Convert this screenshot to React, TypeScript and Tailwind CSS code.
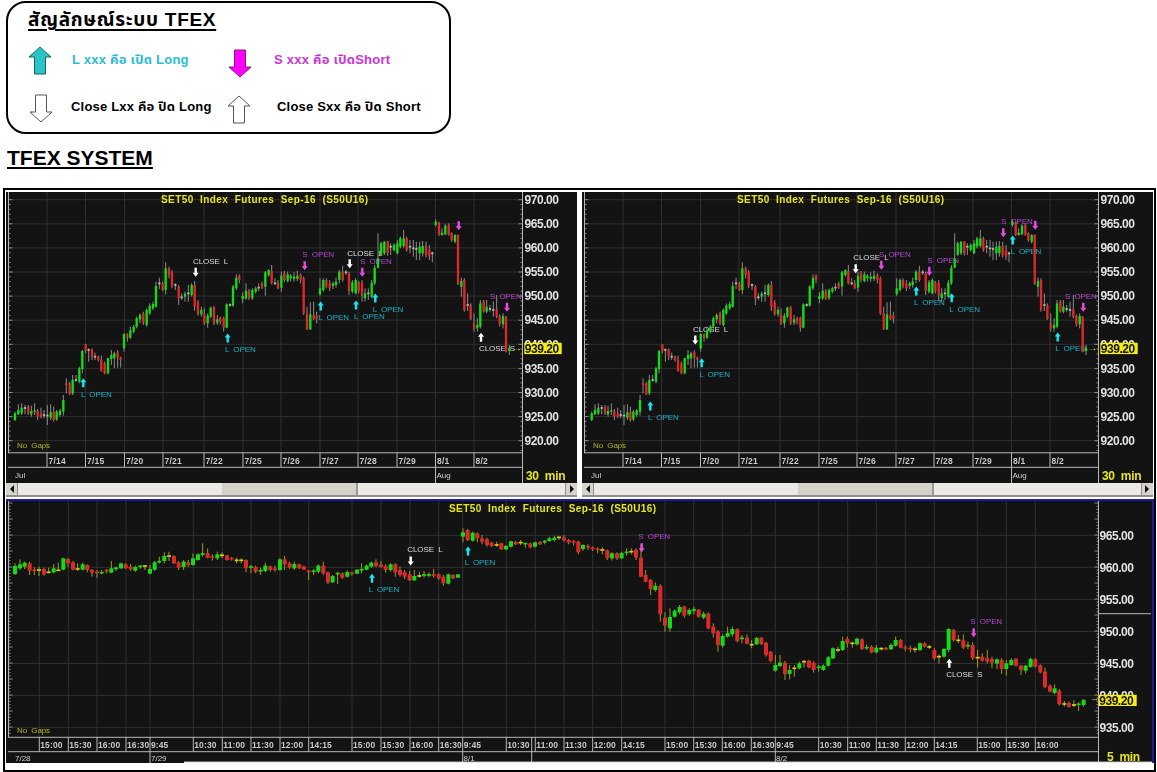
import React from "react";

type C = [number, number, number, number, number, string];
type Note = [string, number, number, string];
type Arrow = [number, number, string, string];

const TEAL = "#17b4c6";
const PURP = "#b545d4";
const WHITE = "#dcdcdc";
const ACY = "#17e8f2";
const AMG = "#e84ae8";
const AWH = "#ffffff";

const a: C[] = [
[45,685,705,680,708,"g"],[55,675,688,658,690,"g"],[65,668,685,655,690,"g"],[75,669,669,660,688,"d"],[85,665,685,660,690,"r"],[94,678,688,662,695,"g"],[104,676,680,655,690,"g"],[113,678,695,672,705,"r"],[123,685,695,668,700,"r"],[132,690,690,675,700,"d"],[142,692,692,660,720,"d"],[152,682,698,658,705,"g"],[161,680,705,665,710,"r"],[170,680,703,675,708,"g"],[180,677,690,672,695,"g"],[190,645,680,630,692,"g"],
[199,595,600,580,625,"r"],[209,595,628,590,630,"r"],[218,585,625,570,630,"g"],[228,585,585,570,590,"d"],[238,550,590,545,595,"g"],[247,498,552,495,565,"g"],[257,478,498,478,505,"r"],[266,495,495,490,530,"d"],[276,493,515,490,525,"r"],[285,515,515,503,525,"d"],[295,515,525,512,530,"r"],[304,525,558,512,560,"r"],[314,535,565,530,568,"r"],[324,520,565,518,568,"g"],[334,510,522,495,540,"g"],[343,505,520,500,550,"g"],[353,502,518,495,548,"r"],[362,518,525,515,548,"r"],
[372,447,490,445,500,"g"],[382,448,458,445,470,"r"],[391,436,458,425,462,"g"],[401,425,440,420,445,"g"],[410,400,425,395,430,"g"],[420,390,403,385,415,"g"],[430,385,415,380,420,"r"],[440,375,420,370,425,"g"],[449,362,385,355,390,"g"],[459,357,370,350,375,"g"],[468,303,365,290,368,"g"],[478,295,295,278,312,"d"],[488,295,315,290,318,"r"],[497,250,315,232,328,"g"],[507,250,270,245,280,"r"],[516,262,303,255,310,"r"],[526,300,300,295,315,"d"],[536,305,340,300,360,"r"],[545,337,337,325,345,"d"],[555,326,335,320,350,"g"],[565,325,325,300,350,"d"],[575,300,330,295,335,"g"],[584,300,365,288,378,"r"],[594,352,388,345,392,"r"],[604,375,388,365,395,"g"],[613,388,415,370,420,"r"],[623,392,415,385,428,"g"],[632,368,395,365,400,"g"],[642,367,415,363,420,"r"],[652,403,413,390,420,"g"],[661,400,410,395,418,"r"],[671,398,428,395,440,"r"],[680,358,428,355,430,"g"],[690,360,360,355,365,"d"],[699,305,362,300,365,"g"],[709,278,310,268,315,"g"],[718,272,285,268,295,"r"],
[728,333,342,322,355,"g"],[738,317,340,295,345,"g"],[747,318,340,312,345,"r"],[757,315,340,310,345,"g"],[767,310,320,305,325,"g"],[776,308,308,295,318,"d"],[786,295,308,290,312,"r"],[796,262,305,258,332,"g"],[806,255,270,253,275,"g"],[815,258,295,240,298,"r"],[825,295,295,280,300,"d"],[834,295,310,285,312,"r"],[844,272,308,260,320,"g"],
];
const b: C[] = [
[-17,265,285,258,292,"r"],[-7,268,288,260,292,"g"],[2,272,280,267,290,"g"],[12,275,282,262,290,"g"],[22,272,282,257,288,"g"],[32,270,285,265,295,"r"],[41,280,385,275,390,"r"],[51,385,433,365,435,"r"],[61,388,433,352,435,"g"],[71,390,402,350,405,"r"],[80,392,402,380,415,"r"],
[90,310,328,280,332,"g"],[100,285,315,280,320,"g"],[109,285,305,280,310,"r"],[119,295,310,285,318,"r"],[129,295,303,290,312,"g"],[138,290,300,278,308,"g"],[148,260,285,255,295,"g"],[158,260,285,242,290,"r"],[168,262,262,255,270,"d"],[177,265,318,260,330,"r"],[187,292,320,285,325,"g"],[197,285,325,280,328,"g"],[206,292,318,288,325,"r"],[216,293,332,285,350,"r"],[225,325,340,310,350,"g"],[235,325,325,310,345,"d"],[245,293,335,285,340,"g"],[254,248,295,240,300,"g"],[264,220,248,145,250,"g"],[273,175,210,170,212,"g"],[283,170,205,168,210,"g"],[293,170,205,168,212,"r"],[302,185,185,175,210,"d"],[312,180,195,175,200,"g"],[322,175,205,165,208,"g"],[331,160,185,155,190,"g"],[341,160,183,135,188,"g"],[350,160,195,155,200,"r"],[360,185,185,165,205,"d"],[370,190,190,165,215,"d"],[379,192,192,170,225,"d"],[389,185,205,170,225,"g"],[398,183,205,168,215,"g"],[408,183,210,170,218,"r"],[418,195,215,180,225,"r"],[427,205,205,200,232,"d"],
[437,110,120,103,125,"g"],[447,112,150,110,153,"r"],[456,143,150,130,152,"g"],[466,122,148,118,150,"g"],[476,120,150,115,152,"r"],[485,145,165,142,170,"r"],[495,150,170,148,175,"g"],[504,150,297,148,300,"r"],[514,288,305,278,335,"g"],[523,285,375,280,380,"r"],[533,360,360,325,378,"d"],[542,360,402,355,405,"r"],[552,415,432,385,440,"r"],[562,420,430,400,440,"g"],[571,355,425,345,430,"g"],[581,350,380,345,383,"r"],[590,365,380,345,385,"g"],[600,372,372,360,380,"d"],[610,375,375,350,395,"d"],[620,373,395,330,400,"r"],[629,393,418,388,425,"r"],[639,393,418,385,430,"g"],[648,395,500,393,502,"r"],[658,488,498,480,510,"g"],
];
const top: C[] = [...a, ...b.map((c) => [c[0] + 870, c[1], c[2], c[3], c[4], c[5]] as C)];

const c6: C[] = [
[45,213,237,205,240,"g"],[60,208,220,193,225,"g"],[74,203,215,200,222,"g"],[89,205,227,200,240,"r"],[103,226,226,217,240,"R"],[117,225,225,215,243,"d"],[132,222,238,218,242,"r"],[146,232,232,218,235,"d"],[161,220,232,208,235,"g"],[175,226,226,203,228,"d"],[190,190,224,188,226,"g"],[204,192,205,190,215,"r"],[219,202,224,198,226,"r"],[233,222,222,205,228,"d"],[248,208,224,203,226,"g"],[262,210,225,208,232,"r"],[276,225,233,222,245,"r"],[291,232,232,225,248,"R"],[305,233,233,225,238,"G"],[320,227,227,222,235,"R"],[334,220,233,198,235,"g"],[348,220,220,215,228,"G"],[363,205,220,203,222,"g"],[377,208,220,205,222,"r"],[392,215,223,207,228,"r"],[406,216,227,212,230,"g"],[421,214,214,210,222,"G"],[435,213,213,210,225,"d"],[450,222,236,210,237,"g"],[464,202,224,198,228,"g"],[478,200,200,185,206,"G"],[493,183,198,172,205,"g"],[507,183,183,170,198,"d"],[522,183,205,181,207,"r"],[536,202,218,198,225,"r"],[551,200,216,195,225,"g"],[565,202,210,195,215,"r"],[579,190,210,175,212,"g"],[594,178,195,175,197,"g"],[608,177,177,145,185,"G"],[623,174,188,160,190,"r"],[637,186,186,178,197,"R"],[652,178,190,170,195,"g"],[666,181,181,172,190,"d"],[681,181,195,180,197,"r"],[695,191,191,186,197,"R"],[710,196,196,188,205,"d"],[724,196,196,190,205,"d"],[738,195,220,193,232,"r"],[753,216,216,210,235,"G"],[767,216,230,212,235,"r"],[782,227,227,218,240,"G"],[796,212,228,203,232,"g"],[811,214,225,212,230,"r"],[825,223,223,212,230,"R"],[840,193,225,190,228,"g"],[854,193,208,183,225,"r"],[869,205,218,200,222,"r"],[883,207,220,200,225,"g"],[898,208,220,206,222,"r"],[912,215,224,212,225,"r"],[926,229,229,225,255,"R"],[941,229,229,222,240,"G"],[955,212,230,208,235,"g"],[970,212,235,200,240,"r"],[984,232,263,230,267,"r"],[998,243,262,240,264,"g"],[1013,236,236,230,267,"G"],[1027,235,248,232,252,"r"],[1042,231,245,226,248,"g"],[1056,235,235,230,242,"R"],[1071,224,236,222,238,"g"],[1085,224,224,205,235,"G"],[1100,212,224,208,226,"g"],[1114,203,215,200,218,"g"],[1128,202,213,193,216,"r"],[1143,209,216,198,218,"r"],[1157,213,225,208,233,"r"],
];
const c7: C[] = [
[2,208,225,205,230,"g"],[16,208,232,205,245,"r"],[30,225,240,215,245,"r"],[44,232,245,225,252,"r"],[59,238,256,228,258,"r"],[73,243,256,225,258,"g"],[88,243,243,230,248,"d"],[102,240,240,228,248,"G"],[117,240,240,232,247,"G"],[131,240,240,222,248,"R"],[146,238,250,235,255,"r"],[160,245,265,240,272,"r"],[175,238,266,236,268,"g"],[189,240,250,238,252,"r"],[204,238,248,238,250,"g"],
[219,112,125,100,142,"g"],[233,105,135,102,138,"r"],[248,113,137,110,140,"g"],[262,115,130,112,142,"r"],[276,130,140,120,148,"r"],[291,133,150,128,155,"r"],[305,143,153,140,156,"r"],[320,150,150,140,155,"d"],[334,145,163,143,165,"r"],[348,153,163,150,166,"g"],[363,139,155,137,158,"g"],[377,141,148,138,150,"r"],[392,143,143,135,150,"d"],[406,146,146,143,158,"G"],[421,145,157,143,160,"r"],[435,142,155,140,158,"g"],[450,142,148,138,150,"r"],[464,140,140,135,148,"G"],[478,130,138,125,140,"g"],[493,128,135,122,140,"g"],[507,127,127,125,135,"d"],[522,127,136,120,140,"r"],[536,135,143,132,148,"r"],[551,140,140,135,152,"R"],[565,140,172,137,178,"r"],[579,150,162,148,168,"g"],[594,155,155,148,165,"R"],[608,157,163,155,168,"r"],[623,163,163,157,175,"R"],[637,165,165,157,178,"d"],[652,166,190,164,195,"r"],[666,175,190,172,197,"g"],[681,175,190,172,195,"r"],[695,174,190,170,193,"g"],[710,172,172,160,182,"G"],[724,170,170,160,178,"d"],[738,165,188,160,195,"r"],[753,188,245,150,247,"r"],[767,240,260,225,262,"r"],[782,255,282,252,300,"r"],[796,272,285,262,290,"g"],[811,273,358,268,380,"r"],[825,368,392,352,410,"r"],[840,366,400,340,410,"g"],[854,347,365,343,368,"g"],[869,336,352,330,358,"g"],[883,335,362,332,368,"r"],[898,345,358,340,362,"g"],[912,345,345,335,358,"G"],[926,344,365,342,368,"r"],[941,356,368,350,372,"g"],[955,356,400,352,403,"r"],[970,395,415,385,428,"r"],[984,410,450,405,470,"r"],[998,423,452,418,458,"g"],[1013,414,425,395,428,"g"],[1027,402,418,395,425,"g"],[1042,403,438,400,442,"r"],[1056,430,430,420,445,"G"],[1071,428,446,418,448,"r"],[1085,449,449,435,460,"d"],[1100,429,448,426,450,"g"],
];
const c8: C[] = [
[4,428,447,426,450,"r"],[18,444,480,440,485,"r"],[32,470,498,468,502,"r"],[46,510,527,480,530,"g"],[60,503,513,480,516,"g"],[75,503,537,498,555,"r"],[89,525,537,510,553,"g"],[103,520,520,510,545,"d"],[118,505,520,500,523,"g"],[132,500,500,495,518,"d"],[147,497,517,495,520,"r"],[161,503,525,500,533,"r"],[176,517,517,510,530,"G"],[190,512,525,508,528,"g"],[205,487,512,483,515,"g"],[219,460,490,457,492,"g"],[234,465,465,455,472,"d"],[248,438,465,425,468,"g"],[262,432,445,425,458,"r"],[277,445,445,440,458,"d"],[291,431,448,428,452,"g"],[306,433,462,430,465,"r"],[320,458,458,448,465,"G"],[335,455,472,450,475,"r"],[349,458,472,450,475,"g"],[364,461,461,456,466,"d"],[378,461,461,456,466,"R"],[393,450,463,445,465,"g"],[407,435,452,425,455,"g"],[422,435,458,432,460,"r"],[436,459,459,450,468,"R"],[451,461,461,452,472,"R"],[465,463,463,455,473,"d"],[480,445,465,442,468,"g"],[494,445,455,442,458,"r"],[508,456,456,450,462,"d"],[523,465,490,460,495,"r"],[537,485,485,478,505,"d"],[552,462,485,458,488,"g"],[566,402,465,400,472,"g"],[581,405,436,402,440,"r"],[595,436,436,420,445,"d"],[610,436,458,418,462,"r"],[624,452,452,440,462,"G"],[638,450,490,442,495,"r"],[653,488,488,465,518,"d"],[667,485,497,475,500,"r"],[682,490,500,465,505,"r"],[696,492,503,485,520,"r"],[711,493,506,490,522,"g"],[725,495,522,490,537,"r"],[739,505,522,495,542,"g"],[754,495,510,490,512,"g"],[768,491,512,490,515,"r"],[783,512,525,510,540,"r"],[797,512,527,510,535,"g"],[812,492,516,488,518,"g"],[826,493,515,490,518,"r"],[841,511,532,508,535,"r"],[855,530,576,518,580,"r"],[870,572,590,568,592,"r"],[884,580,594,568,598,"g"],[898,587,628,582,632,"r"],[913,627,627,618,635,"d"],[927,624,635,620,638,"r"],[942,630,630,615,637,"d"],[956,628,628,622,648,"G"],[971,615,630,612,635,"g"],
];

const GREEN = "#14dc14";
const RED = "#dc2a2a";

function Candles({ data, wick, bw }: { data: C[]; wick: string; bw: number }) {
  const gray = wick === "#8c8c8c";
  return (
    <g>
      {data.map((d, i) => {
        const [x, t, bt, wt, wb, k] = d;
        const color = k === "g" || k === "G" ? GREEN : k === "r" || k === "R" ? RED : k === "d" ? (gray ? "#b8b8b8" : "#d8c820") : wick;
        return (
          <g key={i}>
            <line x1={x} x2={x} y1={wt} y2={wb} stroke={wick} strokeWidth={3} />
            {bt > t ? (
              <rect x={x - bw / 2} y={t} width={bw} height={bt - t} fill={color} />
            ) : (
              <rect x={x - bw / 2} y={t - 2.5} width={bw} height={5} fill={color} />
            )}
          </g>
        );
      })}
    </g>
  );
}

function Arr({ x, y, dir, color }: { x: number; y: number; dir: string; color: string }) {
  const p = dir === "up"
    ? `M${x} ${y - 4.5} L${x + 3} ${y - 0.5} H${x + 1.2} V${y + 4.5} H${x - 1.2} V${y - 0.5} H${x - 3} Z`
    : `M${x} ${y + 4.5} L${x + 3} ${y + 0.5} H${x + 1.2} V${y - 4.5} H${x - 1.2} V${y + 0.5} H${x - 3} Z`;
  return <path d={p} fill={color} />;
}

function Ticks({ x, y0, y1, step, major, side }: { x: number; y0: number; y1: number; step: number; major: number; side: number }) {
  const out: React.ReactNode[] = [];
  let n = 0;
  for (let y = y0; y <= y1; y += step) {
    const big = n % major === 0;
    out.push(<line key={n} x1={x} x2={x + side * (big ? 4 : 2)} y1={y} y2={y} stroke="#a8a8a8" strokeWidth={0.8} />);
    n++;
  }
  return <g>{out}</g>;
}

const TITLE = "SET50  Index  Futures  Sep-16  (S50U16)";
const gridDates: [number, string][] = [[47,"7/14"],[85.5,"7/15"],[124.5,"7/20"],[163,"7/21"],[204,"7/22"],[243,"7/25"],[281,"7/26"],[320,"7/27"],[358,"7/28"],[397,"7/29"],[435.5,"8/1"],[474,"8/2"]];

function Notes({ notes }: { notes: Note[] }) {
  return (
    <g>
      {notes.map(([t, x, y, c], i) => (
        <text key={i} x={x} y={y + 3} fontSize={8} fill={c} xmlSpace="preserve" letterSpacing={-0.1}>{t}</text>
      ))}
    </g>
  );
}

function ArrowsG({ arrows }: { arrows: Arrow[] }) {
  return <g>{arrows.map(([x, y, d, c], i) => <Arr key={i} x={x} y={y} dir={d} color={c} />)}</g>;
}

function TopChart({ dx, notes, arrows, lastX }: { dx: number; notes: Note[]; arrows: Arrow[]; lastX: number }) {
  const prices = [970, 965, 960, 955, 950, 945, 940, 935, 930, 925, 920];
  const py = (p: number) => 199.7 + (970 - p) * 4.82;
  const w = dx ? 570.5 : 571;
  return (
    <svg viewBox={`6 192 ${w} 291`} width={w} height={291} className="block blur-[0.3px] [font-family:'Liberation_Sans',Arial,sans-serif] bg-[#131313]">
      {prices.map((p) => <line key={p} x1={8} x2={522} y1={py(p)} y2={py(p)} stroke="#303030" />)}
      {gridDates.map(([x]) => <line key={x} x1={x} x2={x} y1={192} y2={452.5} stroke="#303030" />)}
      <line x1={8.5} x2={8.5} y1={192} y2={453} stroke="#b8b8b8" />
      <line x1={522.5} x2={522.5} y1={192} y2={483} stroke="#b8b8b8" />
      <line x1={8} x2={522} y1={452.8} y2={452.8} stroke="#b8b8b8" />
      <line x1={8} x2={522} y1={467.3} y2={467.3} stroke="#b8b8b8" />
      <Ticks x={8.5} y0={199.7} y1={452} step={4.82} major={5} side={1} />
      <Ticks x={522.5} y0={199.7} y1={452} step={4.82} major={5} side={-1} />
      {gridDates.map(([x, t]) => (
        <g key={t}>
          <line x1={x} x2={x} y1={453} y2={x === 435.5 ? 483 : 467} stroke="#b8b8b8" />
          <text x={x + 1.5} y={464} fontSize={8.5} fontWeight={700} fill="#c8c8c8" letterSpacing={0.2}>{t}</text>
        </g>
      ))}
      <text x={15} y={478} fontSize={8} fill="#d0d0d0">Jul</text>
      <text x={436.5} y={478} fontSize={8} fill="#d0d0d0">Aug</text>
      <text x={17} y={448} fontSize={8} fill="#b4b42a" xmlSpace="preserve" letterSpacing={-0.1}>No  Gaps</text>
      <text x={161} y={203} fontSize={10} fontWeight={700} fill="#e6e622" xmlSpace="preserve" letterSpacing={0.42}>{TITLE}</text>
      <g transform={`translate(${dx ? 0.7 : 0} 0)`}>
        <Notes notes={notes} />
      </g>
      <g transform={`translate(${dx ? 0.7 : 0} 185) scale(${1 / 3})`}>
        <Candles data={top} wick="#8c8c8c" bw={7} />
      </g>
      <g transform={`translate(${dx ? 0.7 : 0} 0)`}>
        <ArrowsG arrows={arrows} />
      </g>
      <text x={lastX} y={351} fontSize={10} fill="#d8d820">→</text>
      {prices.map((p) => (
        <text key={p} x={524.5} y={py(p) + 4.2} fontSize={12} fontWeight={700} fill="#e2e2e2" letterSpacing={-0.45}>{p.toFixed(2)}</text>
      ))}
      <rect x={524.3} y={342.7} width={37.4} height={11.4} fill="#f4ee12" />
      <text x={524.8} y={352.8} fontSize={12} fontWeight={700} fill="#111" letterSpacing={-0.45}>939.20</text>
      <text x={526} y={480} fontSize={12} fontWeight={700} fill="#e6e622" xmlSpace="preserve" letterSpacing={-0.3}>30  min</text>
    </svg>
  );
}

function Scrollbar({ before, thumb }: { before: string; thumb: string }) {
  return (
    <div className="flex h-[14px] bg-[#eceae4] border-b-2 border-[#8f8f8f]">
      <div className="w-[12px] bg-[#d6d3cb] border-r border-[#8f8f8f] flex items-center justify-center">
        <svg width="6" height="8" viewBox="0 0 6 8"><path d="M5 0V8L1 4Z" fill="#111" /></svg>
      </div>
      <div className={before} />
      <div className={thumb + " bg-[#d4d1c9] border-r-2 border-[#9a9a9a]"} />
      <div className="flex-1" />
      <div className="w-[12px] bg-[#d6d3cb] border-l border-[#8f8f8f] flex items-center justify-center">
        <svg width="6" height="8" viewBox="0 0 6 8"><path d="M1 0V8L5 4Z" fill="#111" /></svg>
      </div>
    </div>
  );
}

const n1: Note[] = [
["CLOSE  L",193,260.6,WHITE],["L  OPEN",81,394,TEAL],["L  OPEN",225,348.7,TEAL],["S  OPEN",302.3,254,PURP],["L  OPEN",318.3,316.7,TEAL],["CLOSE  L",347.3,252.7,WHITE],["S  OPEN",360,260.7,PURP],["L  OPEN",354,315.7,TEAL],["L  OPEN",372.7,308.7,TEAL],["S  OPEN",490,295.7,PURP],["CLOSE  S",479,347.7,WHITE],
];
const a1: Arrow[] = [
[195.7,272.3,"down",AWH],[83.3,382.7,"up",ACY],[227.7,338,"up",ACY],[304.7,265.7,"down",AMG],[320.7,306,"up",ACY],[349.7,263.7,"down",AWH],[362.3,272.3,"down",AMG],[356,305,"up",ACY],[375.3,298,"up",ACY],[458.7,225.7,"down",AMG],[507,307.3,"down",AMG],[481,337.3,"up",AWH],
];
const off = 576.7;
const n2: Note[] = [
["L  OPEN",648-off,417,TEAL],["CLOSE  L",693-off,328.7,WHITE],["L  OPEN",699.3-off,373.7,TEAL],["CLOSE  L",853.3-off,257,WHITE],["S  OPEN",879-off,254,PURP],["S  OPEN",927.3-off,259.7,PURP],["L  OPEN",914-off,302,TEAL],["L  OPEN",949.3-off,308.7,TEAL],["S  OPEN",1001-off,221,PURP],["L  OPEN",1010.7-off,250.7,TEAL],["S  OPEN",1065-off,295.7,PURP],["L  OPEN",1055.3-off,347.7,TEAL],
];
const a2: Arrow[] = [
[650.3-off,406,"up",ACY],[695.3-off,340,"down",AWH],[701.7-off,362.7,"up",ACY],[855.7-off,268.7,"down",AWH],[881.3-off,265.3,"down",AMG],[929.3-off,271.3,"down",AMG],[916.3-off,291,"up",ACY],[951.7-off,297.7,"up",ACY],[1003.3-off,232.7,"down",AMG],[1035.3-off,225.3,"down",AMG],[1012.7-off,240,"up",ACY],[1083.3-off,307.3,"down",AMG],[1057.7-off,337,"up",ACY],
];

const tt: [number, string][] = [[39.3,"15:00"],[68.3,"15:30"],[97,"16:00"],[126,"16:30"],[150,"9:45"],[193.3,"10:30"],[222.3,"11:00"],[251,"11:30"],[280,"12:00"],[308.7,"14:15"],[352,"15:00"],[381,"15:30"],[410,"16:00"],[438.7,"16:30"],[462.7,"9:45"],[506.3,"10:30"],[535.3,"11:00"],[564,"11:30"],[592.7,"12:00"],[621.7,"14:15"],[665,"15:00"],[693.7,"15:30"],[722.3,"16:00"],[751.3,"16:30"],[775.3,"9:45"],[818.7,"10:30"],[847.7,"11:00"],[876.3,"11:30"],[905.3,"12:00"],[934.3,"14:15"],[977.3,"15:00"],[1006.3,"15:30"],[1035.3,"16:00"]];

function BottomChart() {
  const prices = [965, 960, 955, 950, 945, 940, 935];
  const py = (p: number) => 535.3 + (965 - p) * 6.41;
  return (
    <svg viewBox="6 501 1146 262" width={1146} height={262} className="block blur-[0.3px] [font-family:'Liberation_Sans',Arial,sans-serif] bg-[#131313]">
      {prices.map((p) => <line key={p} x1={8} x2={1098} y1={py(p)} y2={py(p)} stroke="#303030" />)}
      {tt.map(([x], i) => <line key={i} x1={x} x2={x} y1={501} y2={737} stroke="#303030" />)}
      <line x1={8.5} x2={8.5} y1={501} y2={737} stroke="#b8b8b8" />
      <line x1={1098.5} x2={1098.5} y1={501} y2={763} stroke="#b8b8b8" />
      <line x1={1098} x2={1151} y1={613.7} y2={613.7} stroke="#b8b8b8" />
      <line x1={8} x2={1098} y1={737.3} y2={737.3} stroke="#b8b8b8" />
      <line x1={8} x2={1098} y1={751.7} y2={751.7} stroke="#b8b8b8" />
      <Ticks x={8.5} y0={503} y1={736} step={3.2} major={5} side={1} />
      <Ticks x={1098.5} y0={503} y1={736} step={3.2} major={5} side={-1} />
      {tt.map(([x, t], i) => (
        <g key={i}>
          <line x1={x} x2={x} y1={737} y2={t === "9:45" ? 763 : 751.5} stroke="#b8b8b8" />
          <text x={x + 1} y={748} fontSize={8.5} fontWeight={700} fill="#c8c8c8" letterSpacing={0.1}>{t}</text>
        </g>
      ))}
      <line x1={531.7} x2={531.7} y1={737} y2={763} stroke="#b8b8b8" />
      <rect x={184} y={761.6} width={968} height={1.4} fill="#e8e8e8" />
      <text x={15} y={760.5} fontSize={8} fill="#d0d0d0">7/28</text>
      <text x={151} y={760.5} fontSize={8} fill="#d0d0d0">7/29</text>
      <text x={463.5} y={760.5} fontSize={8} fill="#d0d0d0">8/1</text>
      <text x={776} y={760.5} fontSize={8} fill="#d0d0d0">8/2</text>
      <text x={17} y={733} fontSize={8} fill="#b4b42a" xmlSpace="preserve" letterSpacing={-0.1}>No  Gaps</text>
      <text x={449} y={512} fontSize={10} fontWeight={700} fill="#e6e622" xmlSpace="preserve" letterSpacing={0.42}>{TITLE}</text>
      <g transform="translate(0 495) scale(0.3333)"><Candles data={c6} wick="#a39a22" bw={12} /></g>
      <g transform="translate(390 495) scale(0.3333)"><Candles data={c7} wick="#a39a22" bw={12} /></g>
      <g transform="translate(760 495) scale(0.3333)"><Candles data={c8} wick="#a39a22" bw={12} /></g>
      <Notes notes={[["L  OPEN",368.7,589.3,TEAL],["CLOSE  L",407.3,549,WHITE],["L  OPEN",464.7,562,TEAL],["S  OPEN",638.3,536.3,PURP],["S  OPEN",970.3,621.3,PURP],["CLOSE  S",946.3,674.3,WHITE]]} />
      <ArrowsG arrows={[[372,578.3,"up",ACY],[410.7,561,"down",AWH],[468,551,"up",ACY],[641.7,547.7,"down",AMG],[973.7,632.7,"down",AMG],[949.3,663.3,"up",AWH]]} />
      <text x={1090} y={701} fontSize={9} fill="#d8d820">→</text>
      {prices.map((p) => (
        <text key={p} x={1099.5} y={py(p) + 4.2} fontSize={12} fontWeight={700} fill="#e2e2e2" letterSpacing={-0.45}>{p.toFixed(2)}</text>
      ))}
      <rect x={1098.7} y={694.8} width={38} height={11.2} fill="#f4ee12" />
      <text x={1099.2} y={704.8} fontSize={12} fontWeight={700} fill="#111" letterSpacing={-0.45}>939.20</text>
      <text x={1107} y={761} fontSize={12} fontWeight={700} fill="#e6e622" xmlSpace="preserve" letterSpacing={-0.3}>5  min</text>
    </svg>
  );
}

function BlockArrow({ dir, fill, stroke, extra }: { dir: "up" | "down"; fill: string; stroke: string; extra?: string }) {
  return (
    <svg width="24" height="29" viewBox="0 0 24 29" className={"block shrink-0 " + (extra || "")}>
      <path
        d={dir === "up" ? "M12 1 L23 11 H17.5 V28 H6.5 V11 H1 Z" : "M12 28 L23 18 H17.5 V1 H6.5 V18 H1 Z"}
        fill={fill}
        stroke={stroke}
        strokeWidth="1"
      />
    </svg>
  );
}

const thai = "font-['Liberation_Sans','Noto_Sans','Noto_Sans_Thai',Arial,sans-serif]";

export default function App() {
  return (
    <div className={"w-[1157px] h-[772px] bg-white overflow-hidden " + thai}>
      <div className="ml-[6px] mt-[1px] w-[445px] h-[133px] border-2 border-black rounded-[20px] pl-[20px] pt-[5px] flex flex-col">
        <div className="text-[19px] leading-[24px] font-bold text-black underline underline-offset-[3px] decoration-2 tracking-[0.7px]">สัญลักษณ์ระบบ TFEX</div>
        <div className="mt-[12px] flex items-center h-[32px]">
          <BlockArrow dir="up" fill="#27c4c8" stroke="#1f5f60" />
          <span className="ml-[20px] w-[156px] text-[13px] font-bold text-[#2bbcd8] tracking-[0.25px]">L xxx คือ เปิด Long</span>
          <BlockArrow dir="down" fill="#ff00ff" stroke="#7a1f7a" extra="translate-y-[3px]" />
          <span className="ml-[22px] text-[13px] font-bold text-[#cc33d6] tracking-[0.25px]">S xxx คือ เปิดShort</span>
        </div>
        <div className="mt-[15px] flex items-center h-[32px]">
          <BlockArrow dir="down" fill="#ffffff" stroke="#555555" extra="translate-x-[1px] translate-y-[1px]" />
          <span className="ml-[19px] w-[156px] text-[13px] font-bold text-black tracking-[0.2px]">Close Lxx คือ ปิด Long</span>
          <BlockArrow dir="up" fill="#ffffff" stroke="#555555" extra="translate-y-[2px]" />
          <span className="ml-[26px] text-[13px] font-bold text-black tracking-[0.2px]">Close Sxx คือ ปิด Short</span>
        </div>
      </div>
      <div className="mt-[11px] ml-[7px] h-[43px] text-[21px] leading-[26px] font-bold text-black underline underline-offset-[2px] decoration-2">TFEX SYSTEM</div>
      <div className="ml-[3px] w-[1153px] h-[584px] border-2 border-black pl-[1px] pt-[2px] bg-white">
        <div className="flex gap-[5px]">
          <div className="w-[571px]">
            <TopChart dx={0} notes={n1} arrows={a1} lastX={512} />
            <Scrollbar before="w-[204px]" thumb="w-[136px]" />
          </div>
          <div className="w-[570.5px]">
            <TopChart dx={1} notes={n2} arrows={a2} lastX={511.5} />
            <Scrollbar before="w-[204px]" thumb="w-[136px]" />
          </div>
        </div>
        <div className="mt-[2px] w-[1148px] border-t-2 border-r-2 border-[#1c1c9c]">
          <BottomChart />
        </div>
      </div>
    </div>
  );
}
